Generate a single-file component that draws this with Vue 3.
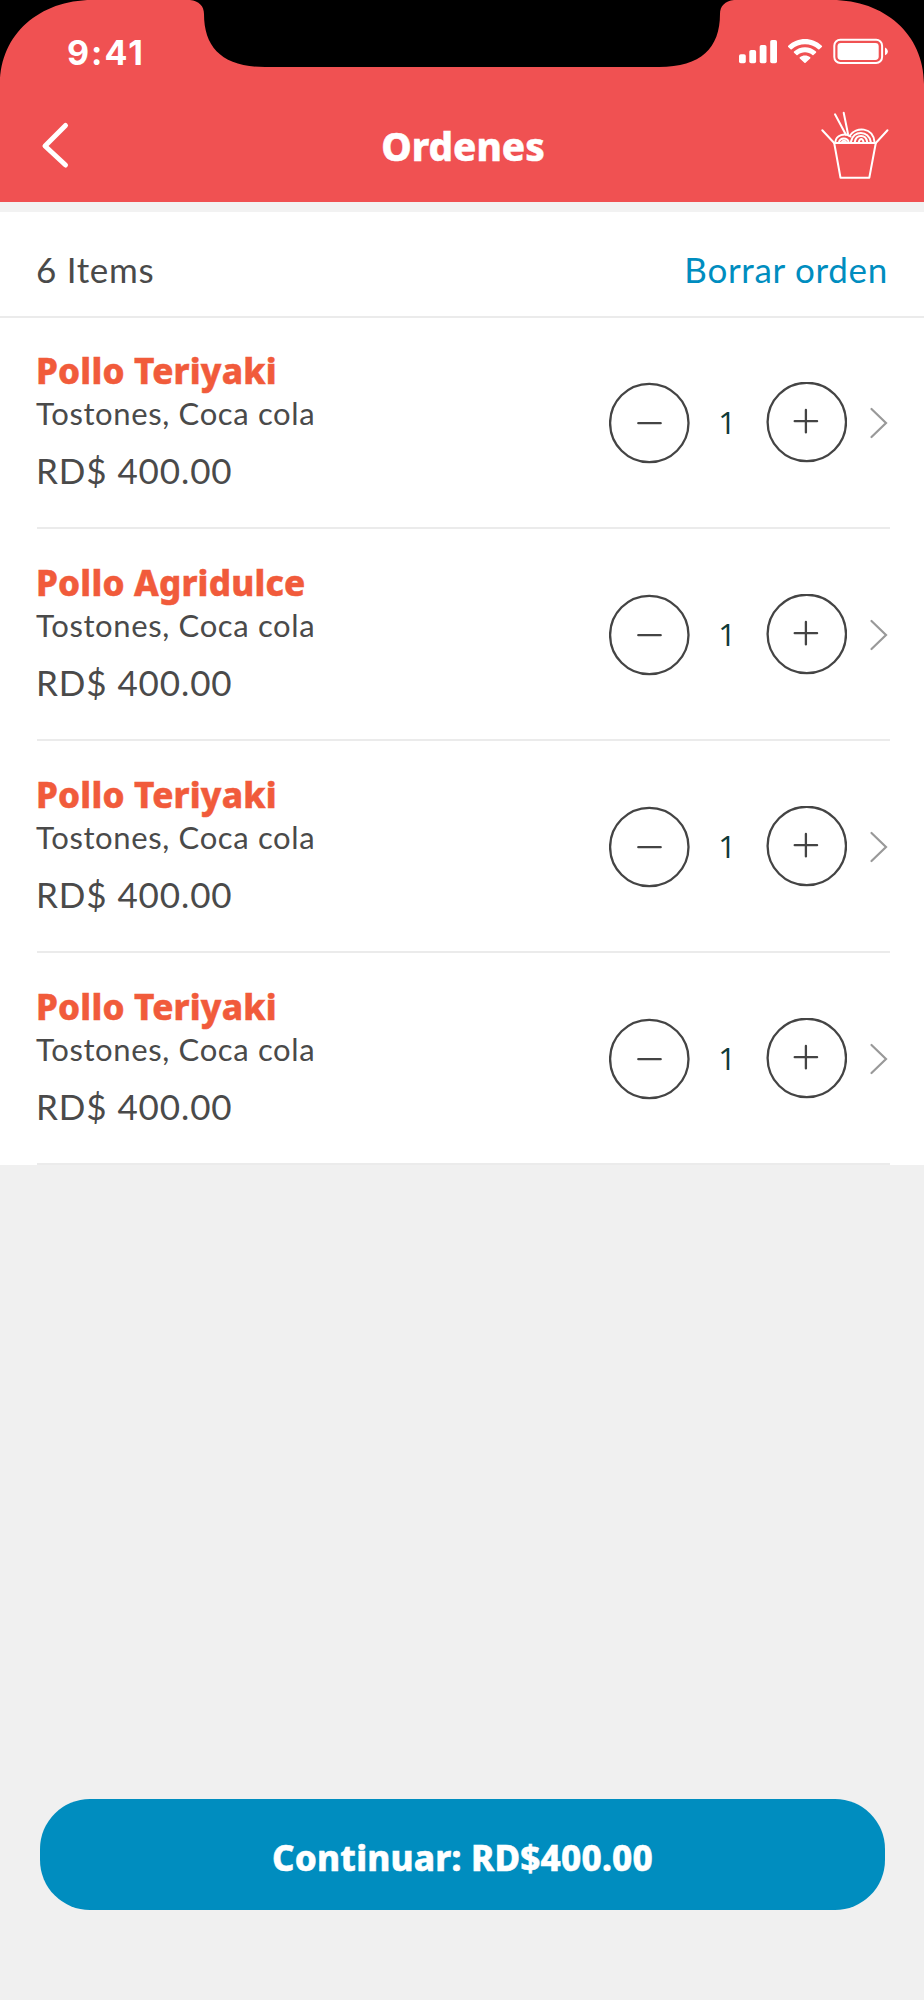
<script setup>
const items = [
  { name: 'Pollo Teriyaki', extras: 'Tostones, Coca cola', price: 'RD$ 400.00', qty: 1 },
  { name: 'Pollo Agridulce', extras: 'Tostones, Coca cola', price: 'RD$ 400.00', qty: 1 },
  { name: 'Pollo Teriyaki', extras: 'Tostones, Coca cola', price: 'RD$ 400.00', qty: 1 },
  { name: 'Pollo Teriyaki', extras: 'Tostones, Coca cola', price: 'RD$ 400.00', qty: 1 },
]
</script>

<template>
  <main class="screen">
    <header class="top">
      <svg class="bezel" width="924" height="90" viewBox="0 0 924 90" aria-hidden="true">
        <path d="M0 0H92C40 0 0 34 0 84Z" />
        <path d="M924 0H832C884 0 924 34 924 84Z" />
        <path d="M190 0C199 1 204 6 204 14C204 48 223 67 265 67H659C701 67 720 48 720 14C720 6 725 1 734 0Z" />
      </svg>
      <div class="status">
        <span class="time">9:41</span>
        <svg width="150" height="26" viewBox="738 38 150 26" fill="#fff" aria-hidden="true">
          <rect x="739" y="54.3" width="6.8" height="9" rx="1.8" />
          <rect x="749.3" y="50" width="6.8" height="13.3" rx="1.8" />
          <rect x="759.7" y="45" width="6.8" height="18.3" rx="1.8" />
          <rect x="770.2" y="40" width="6.8" height="23.3" rx="1.8" />
          <path d="M788.2 45.8C797.5 36.8 812.5 36.8 821.8 45.8Q822.4 46.4 821.8 47L819.4 49.2Q818.8 49.7 818.2 49.2C810.8 42.6 799.2 42.6 791.8 49.2Q791.2 49.7 790.6 49.2L788.2 47Q787.7 46.4 788.2 45.8Z" />
          <path d="M794 51.6C800.2 45.8 809.8 45.8 816 51.6Q816.6 52.1 816 52.7L813.5 55Q813 55.5 812.4 55C808.2 51.2 801.8 51.2 797.6 55Q797 55.5 796.5 55L794 52.7Q793.4 52.1 794 51.6Z" />
          <path d="M799.8 57.2C802.8 54.8 807.2 54.8 810.2 57.2Q810.8 57.8 810.2 58.4L805.6 62.7Q805 63.3 804.4 62.7L799.8 58.4Q799.2 57.8 799.8 57.2Z" />
          <rect x="834.3" y="39.8" width="47.8" height="23.2" rx="6" fill="none" stroke="#fff" stroke-width="2" />
          <rect x="837.5" y="43" width="41.2" height="17" rx="3.4" />
          <path d="M885 47.5C888.8 49.5 888.8 53.7 885 55.3Z" />
        </svg>
      </div>
      <div class="nav">
        <svg width="30" height="50" viewBox="40 120 30 50" fill="none" stroke="#fff" stroke-width="5" stroke-linecap="round" stroke-linejoin="round" aria-hidden="true">
          <path d="M65.5 125.5L45 146L65.5 165" />
        </svg>
        <h1>Ordenes</h1>
        <svg width="70" height="70" viewBox="820 110 70 70" fill="none" stroke="#fff" stroke-width="2" stroke-linecap="round" stroke-linejoin="round" aria-hidden="true">
          <path d="M834.2 143H875.8L869.3 177.7H840.5Z" />
          <path d="M834.2 143L822.3 130.3M875.8 143L887.5 130.3" />
          <path d="M845.8 134.5L835 114.3M848 134L843.7 112.7" />
          <path d="M835.3 142A9.2 8.2 0 0 1 850.5 136.5M839 142A5 4.6 0 0 1 848.5 141.5M842 142A2.2 2 0 0 1 846 142" />
          <path d="M849.5 136C856 126 873 127 874.5 142M851 141.5C853 130 869 130 870.8 142M854.8 142C856 134 866 134 867.2 142M858.8 142C860 138 862.5 138 863.5 142" />
        </svg>
      </div>
    </header>

    <section class="sheet">
      <div class="summary">
        <span>6 Items</span>
        <a class="clear">Borrar orden</a>
      </div>
      <ul class="list">
        <li v-for="(item, i) in items" :key="i" class="row">
          <div class="info">
            <h2>{{ item.name }}</h2>
            <p class="extras">{{ item.extras }}</p>
            <p class="price">{{ item.price }}</p>
          </div>
          <div class="stepper">
            <svg width="81" height="82" viewBox="0 0 81 82" class="line" aria-hidden="true">
              <circle cx="40.3" cy="41" r="39.2" />
              <path d="M29.3 41.2H51.7" />
            </svg>
            <span class="qty">{{ item.qty }}</span>
            <svg width="81" height="82" viewBox="0 0 81 82" class="line" aria-hidden="true">
              <circle cx="40.8" cy="40" r="39.2" />
              <path d="M28.7 39.2H51.1M39.9 28V50.4" />
            </svg>
            <svg class="go" width="20" height="34" viewBox="0 0 20 34" aria-hidden="true">
              <path d="M2.5 3L17 17L2.5 31" />
            </svg>
          </div>
        </li>
      </ul>
    </section>

    <footer class="bottom">
      <button type="button">Continuar: RD$400.00</button>
    </footer>
  </main>
</template>

<style>
body {
  margin: 0;
}
</style>

<style scoped>
.screen {
  width: 924px;
  height: 2000px;
  display: flex;
  flex-direction: column;
  background: #f0f0f0;
  color: #4a4a4a;
  font-family: Lato, "Open Sans", sans-serif;
  font-variant-ligatures: none;
}

.top {
  position: relative;
  box-sizing: border-box;
  height: 201.5px;
  flex: none;
  background: #f05152;
  color: #fff;
}

.bezel {
  position: absolute;
  top: 0;
  left: 0;
}

.status {
  position: relative;
  box-sizing: border-box;
  height: 90px;
  padding: 38px 36px 0 67px;
  display: flex;
  justify-content: space-between;
}

.time {
  font: 700 34px/30px Inter, sans-serif;
  letter-spacing: 2px;
}

.nav {
  display: flex;
  align-items: center;
  justify-content: space-between;
  padding: 20px 34px 0 40px;
}

h1,
h2,
p {
  margin: 0;
}

h1 {
  margin: 2px 0 0 36px;
  font: 800 38.5px/50px "Noto Sans", sans-serif;
  -webkit-text-stroke: 0.5px #fff;
}

.sheet {
  border-top: 10.5px solid #f2f2f2;
  background: #fff;
}

.summary {
  display: flex;
  justify-content: space-between;
  box-sizing: border-box;
  height: 106px;
  padding: 37px 36px 0 36px;
  border-bottom: 2px solid #ebebeb;
  font-size: 35px;
  line-height: 40px;
  letter-spacing: 0.7px;
}

.clear {
  color: #008dbf;
}

.list {
  margin: -1px 0 0;
  padding: 0;
  list-style: none;
}

.row {
  box-sizing: border-box;
  height: 212px;
  margin: 0 34px 0 37px;
  padding-top: 34px;
  border-bottom: 2px solid #ebebeb;
  display: flex;
  justify-content: space-between;
}

.info {
  margin-left: -1px;
}

h2 {
  color: #f15b3b;
  font: 800 35px/40px "Noto Sans", sans-serif;
  letter-spacing: 0.2px;
  -webkit-text-stroke: 0.5px #f15b3b;
}

.extras {
  margin-top: 4px;
  font-size: 31px;
  line-height: 36px;
  letter-spacing: 0.64px;
}

.price {
  margin-top: 19px;
  font-size: 35px;
  line-height: 40px;
  letter-spacing: 0.9px;
}

.stepper {
  display: flex;
  align-items: center;
  height: 82px;
  margin: 31px 1px 0 0;
}

.line {
  fill: none;
  stroke: #444;
  stroke-width: 2.3;
  stroke-linecap: round;
}

.qty {
  width: 74px;
  padding-right: 2px;
  text-align: center;
  color: #0e3a37;
  font: 400 31px/40px "Open Sans", sans-serif;
  margin-top: -2px;
}

.go {
  margin-left: 22px;
  fill: none;
  stroke: #999;
  stroke-width: 2.2;
  stroke-linecap: round;
}

.bottom {
  margin-top: auto;
  padding: 0 39px 90.5px 40px;
}

button {
  display: block;
  width: 100%;
  height: 110.5px;
  padding: 8px 0 0;
  border: 0;
  border-radius: 50px;
  background: #008dbf;
  color: #fff;
  font: 800 35px/40px "Noto Sans", sans-serif;
  letter-spacing: 0.2px;
  -webkit-text-stroke: 0.5px #fff;
}
</style>
